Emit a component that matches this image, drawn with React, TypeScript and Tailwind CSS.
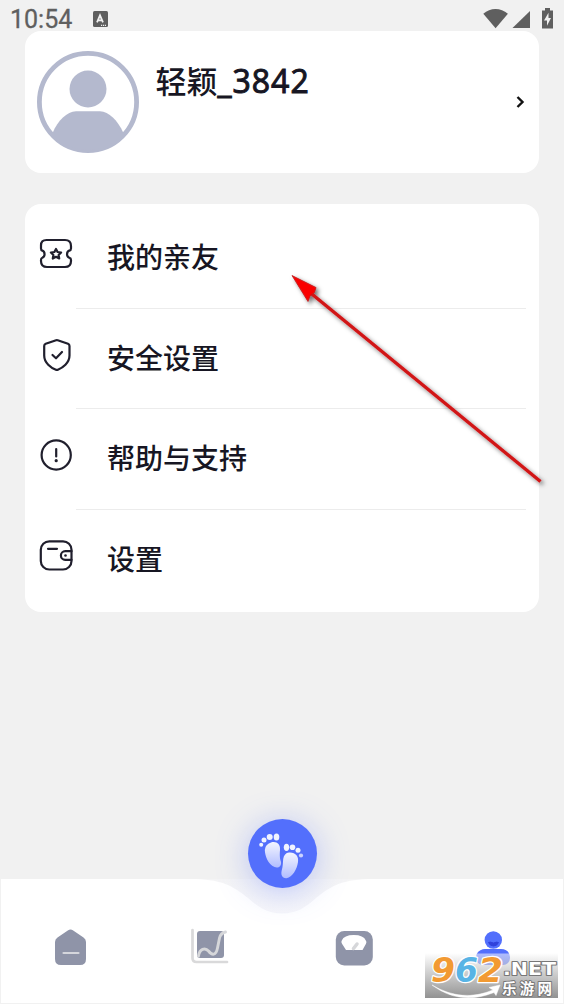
import type { ReactNode } from 'react'

const CJK = "font-['Noto_Sans_CJK_SC',sans-serif]"

function StatusBar() {
  return (
    <header className="flex h-[31px] items-start text-[#5f5f5f]">
      <span className="ml-[10px] mt-[5px] font-['Roboto',sans-serif] text-[25px] leading-[29px] [-webkit-text-stroke:0.3px_#5f5f5f]">
        10:54
      </span>
      <svg className="ml-[21px] mt-[11px]" width="15" height="16" viewBox="0 0 15 16">
        <rect width="15" height="16" rx="1.5" fill="currentColor" />
        <path d="M4 11.3 7 4.3l3 7M5.2 9.3h3.6" fill="none" stroke="#f1f1f1" strokeWidth="1.8" />
        <path d="M8 14.3h5" stroke="#f1f1f1" strokeWidth="1.2" strokeDasharray="1.2 0.8" />
      </svg>
      <svg className="ml-auto mr-[10px] mt-[7px]" width="72" height="23" viewBox="0 0 72 23" fill="currentColor">
        <path d="M1.3 6.8C8.3 0.5 18.7 0.5 25.9 6.8L13.6 21.2Z" />
        <path d="M48 4v17H30.5Z" />
        <path d="M60 3.5h3V1h5v2.5h3V21.5H60Z" />
        <path d="M66.5 5.8 62 13.5h3v5.2l4-7.7h-2.5Z" fill="#f1f1f1" />
      </svg>
    </header>
  )
}

function Avatar() {
  return (
    <svg width="102" height="102" viewBox="0 0 102 102">
      <circle cx="51" cy="51" r="48.6" fill="white" stroke="#b4b9ce" strokeWidth="4.8" />
      <circle cx="51" cy="38" r="18.5" fill="#b4b9ce" />
      <path d="M15.6 82C21 69 30 61 39 60.3H63C72 61 80.5 69 86.4 82Q71 99 51 99T15.6 82Z" fill="#b4b9ce" />
    </svg>
  )
}

function ProfileCard() {
  return (
    <section className="mx-[25px] flex h-[141.5px] rounded-[16px] bg-white pl-[12px] pr-[13px] pt-5 text-[#171623]">
      <Avatar />
      <div className={`ml-[16.5px] mt-[6px] text-[31px] font-medium leading-[46px] ${CJK}`}>
        轻颖
        <span className="font-['Open_Sans',sans-serif] text-[32px] font-normal tracking-[1px] [-webkit-text-stroke:1px_#171623]">
          _3842
        </span>
      </div>
      <svg className="ml-auto mt-[44px]" width="12" height="14" viewBox="0 0 12 14">
        <path d="m3.5 2 5 5-5 5" fill="none" stroke="#111" strokeWidth="2.4" />
      </svg>
    </section>
  )
}

function Icon({ children }: { children: ReactNode }) {
  return (
    <svg
      width="34"
      height="34"
      viewBox="0 0 34 34"
      fill="none"
      stroke="#201f2d"
      strokeWidth="2.2"
      strokeLinecap="round"
      strokeLinejoin="round"
    >
      {children}
    </svg>
  )
}

const items = [
  {
    label: '我的亲友',
    icon: (
      <Icon>
        <path d="M7.5 3H26Q32 3 32 9V11.5Q32 13.2 30.3 13.6A4 4 0 0 0 30.3 20.8Q32 21.2 32 23V24Q32 30 26 30H8Q2 30 2 24V23Q2 21.2 3.3 20.8A4 4 0 0 0 3.3 13.6Q2 13.2 2 11.5V8.5Q2 3 7.5 3Z" />
        <path d="m17 11.9 1.6 3.1 3.5.5-2.5 2.5.6 3.5-3.2-1.7-3.2 1.7.6-3.5-2.5-2.5 3.5-.5Z" />
      </Icon>
    ),
  },
  {
    label: '安全设置',
    icon: (
      <Icon>
        <path d="M18.7 2.2Q17.9 2 17.1 2.2L6.7 5.8Q5.2 6.4 5.2 8V17.5C5.2 25 12 29.8 16.9 31.7Q17.9 32.2 18.9 31.7C23.5 29.8 30.5 25 30.5 17.5V8Q30.5 6.4 29 5.8Z" />
        <path d="m13.5 17 3.5 3.3 6-6.3" />
      </Icon>
    ),
  },
  {
    label: '帮助与支持',
    icon: (
      <Icon>
        <circle cx="17.2" cy="17" r="14.6" />
        <path d="M17.2 11v7.5" />
        <circle cx="17.2" cy="22.7" r="1.6" fill="#201f2d" stroke="none" />
      </Icon>
    ),
  },
  {
    label: '设置',
    icon: (
      <Icon>
        <rect x="1.8" y="2.3" width="30.7" height="28.2" rx="8.5" />
        <path d="M9 9.8h9M32.5 12.2h-6.300a4.300 4.300 0 0 0 0 8.600H32.500" />
        <circle cx="26.500" cy="16.500" r="1.300" fill="#201f2d" stroke="none" />
      </Icon>
    ),
  },
]

function MenuCard() {
  return (
    <section className="mx-[25px] mt-[31.5px] h-[407.5px] rounded-[16px] bg-white pt-[4px]">
      {items.map((item, i) => (
        <div key={item.label} className="flex h-[100.5px] pl-[14px] pr-[13px]">
          <div className="mt-[29px] w-[36.5px]">{item.icon}</div>
          <div
            className={`flex-1 pl-[31.5px] pt-[27px] text-[28px] font-medium leading-[42px] text-[#171623] ${CJK} ${i < items.length - 1 ? 'border-b-[1.5px] border-[#ececec]' : ''}`}
          >
            {item.label}
          </div>
        </div>
      ))}
    </section>
  )
}

function PointerArrow() {
  return (
    <svg className="pointer-events-none absolute left-[280px] top-[265px]" width="280" height="235" viewBox="0 0 280 235">
      <defs>
        <filter id="arrowShadow" x="-10%" y="-10%" width="125%" height="125%">
          <feDropShadow dx="2.5" dy="2.5" stdDeviation="2" floodColor="#000" floodOpacity=".55" />
        </filter>
      </defs>
      <g filter="url(#arrowShadow)">
        <path d="M30 27.5 260.5 216.5" stroke="#d11419" strokeWidth="3.4" />
        <path d="M12 10.5 36 22.5 34.5 27.5 30 31 28 36.5Z" fill="#fa0505" stroke="#bb1b1b" strokeWidth=".8" />
      </g>
    </svg>
  )
}

function StepsButton() {
  return (
    <button
      aria-label="Steps"
      className="absolute left-[246.5px] top-[-60px] h-[69px] w-[69px] rounded-full bg-[#536ffc] shadow-[0_4px_32px_rgba(83,111,252,0.36)]"
    >
      <svg width="69" height="69" viewBox="0 0 69 69">
        <defs>
          <linearGradient id="sole" x1="0" y1="0" x2="0" y2="1">
            <stop offset="0" stopColor="#f3f5ff" />
            <stop offset="1" stopColor="#b1bdff" />
          </linearGradient>
        </defs>
        <path d="M23 23.5C28.5 22 32.5 25 32 31C31.5 37 32 40 33 43C33.8 47.5 30 49.5 26.5 48C20 45 17 37 16.8 31Q17 25.5 23 23.5Z" fill="url(#sole)" />
        <path d="M41 33.5C47.5 33 51 37.5 50 43C49 50 44.5 58.5 38.5 59.2C34 59.5 32.7 55.5 33.7 51.5C35 47.5 34.8 44 35.2 40Q36.2 34 41 33.5Z" fill="url(#sole)" />
        <g fill="#f1f4ff">
          <ellipse cx="28.5" cy="18" rx="2.8" ry="3.6" />
          <circle cx="21.7" cy="18" r="3" />
          <circle cx="16" cy="21" r="2.5" />
          <circle cx="13.2" cy="25.7" r="2" />
          <ellipse cx="38.5" cy="28.3" rx="2.7" ry="3.6" />
          <circle cx="44.5" cy="28.3" r="2.8" />
          <circle cx="50" cy="31.3" r="2.5" />
          <circle cx="53" cy="36.5" r="2.1" fill="#cbd3ff" />
        </g>
      </svg>
    </button>
  )
}

function BottomNav() {
  return (
    <nav className="relative mt-auto h-[125px] border-b border-l border-r border-[#f1f1f1] bg-white">
      {/* curved notch under the round button, fading towards the bar */}
      <svg className="absolute left-[195px] top-0" width="172" height="35" viewBox="0 0 172 35">
        <defs>
          <linearGradient id="notch" x1="0" y1="0" x2="0" y2="1">
            <stop offset="0" stopColor="#f4f4f5" />
            <stop offset="1" stopColor="#f7f7fa" />
          </linearGradient>
        </defs>
        <path d="M0 0C28 1 38 8 52 19C62 28 71 34.5 86 34.5C101 34.5 110 28 120 19C134 8 144 1 172 0Z" fill="url(#notch)" />
      </svg>
      <StepsButton />
      <div className="relative flex justify-between pl-[53px] pr-[52px] pt-[49px]">
        <svg width="33" height="40" viewBox="0 0 33 40">
          <path d="M13.8 2.5Q16.5.5 19.2 2.5L29.5 9.5Q32 11.2 32 14V31Q32 37 26 37H7Q1 37 1 31V14Q1 11.2 3.5 9.5Z" fill="#8f94a8" />
          <path d="M9.5 25h15" stroke="#d5d6dc" strokeWidth="2.2" strokeLinecap="round" />
        </svg>
        <svg className="ml-[21px]" width="39" height="40" viewBox="0 0 39 40">
          <rect x="7" y="3" width="27" height="27" rx="3" fill="#8f94a8" />
          <path d="M2.5 2V30Q2.5 34 6.5 34H37" fill="none" stroke="#d9d9da" strokeWidth="2.7" strokeLinecap="round" />
          <path d="M8.5 28C9.5 21 15 19 18.5 23C22 27.5 26 28 27.5 20L29.5 10Q30.8 5 35.5 4" fill="none" stroke="#d6d7da" strokeWidth="2.9" strokeLinecap="round" />
        </svg>
        <svg className="ml-[23px]" width="38" height="40" viewBox="0 0 38 40">
          <rect x=".8" y="3" width="37" height="34.5" rx="8.5" fill="#8f94a8" />
          <path d="M6.8 12.5Q9 7 18.8 7T30.8 12.5Q32 14 31 15.7L27.5 22H11L7 15.7Q5.8 14 6.8 12.5Z" fill="white" />
          <path d="m18.5 20.5 3.5-4.5" stroke="#d6d7da" strokeWidth="3.5" strokeLinecap="round" />
        </svg>
        <svg className="ml-[20px]" width="36" height="40" viewBox="0 0 36 40">
          <circle cx="18.3" cy="12" r="8.7" fill="#526ffc" />
          <path d="M13.5 14.5Q15 13.5 18.5 15Q22 13.5 23.5 14.5Q22 18 18.5 18T13.5 14.5Z" fill="#3042db" stroke="#3042db" />
          <rect x="1" y="22" width="34" height="15" rx="7" fill="#aebcff" />
          <path d="M2 25.5Q5 21 10 21H26Q32 21 34 25.5Z" fill="#526ffc" />
        </svg>
      </div>
    </nav>
  )
}

function SiteMark() {
  return (
    <div className="absolute left-[425px] top-[953px] h-[45px] w-[133px] bg-linear-to-b from-transparent to-[#777777cc]">
      <svg className="absolute left-0 top-[-6px]" width="135" height="52" viewBox="0 0 135 52">
        <g stroke="white" strokeWidth="2.5" paintOrder="stroke" strokeLinejoin="round">
          <g fontFamily="DejaVu Sans, sans-serif" fontSize="33" fontWeight="700" fontStyle="italic">
            <text x="6" y="34.5" textLength="24" lengthAdjust="spacingAndGlyphs" fill="#f29a32">9</text>
            <text x="30" y="34.5" textLength="23" lengthAdjust="spacingAndGlyphs" fill="#58b4e5">6</text>
            <text x="53" y="34.5" textLength="25" lengthAdjust="spacingAndGlyphs" fill="#f29a32">2</text>
          </g>
          <path d="M7 38Q37 56 68 43L64 40.5 75 38 71 48.5 69 45.5Q35 59 7 38Z" fill="white" strokeWidth=".5" />
        </g>
        <g fill="white" stroke="#777" strokeWidth="2" paintOrder="stroke" strokeLinejoin="round">
          <text x="78" y="28" textLength="53" fontFamily="DejaVu Sans, sans-serif" fontSize="17" fontWeight="700" lengthAdjust="spacingAndGlyphs">.NET</text>
          <text x="77" y="47" textLength="50" fontFamily="Noto Sans CJK SC, sans-serif" fontSize="14.5" fontWeight="700">乐游网</text>
        </g>
      </svg>
    </div>
  )
}

export default function App() {
  return (
    <main className="relative flex h-[1004px] w-[564px] flex-col overflow-hidden bg-[#f1f1f1]">
      <StatusBar />
      <ProfileCard />
      <MenuCard />
      <BottomNav />
      <PointerArrow />
      <SiteMark />
    </main>
  )
}
